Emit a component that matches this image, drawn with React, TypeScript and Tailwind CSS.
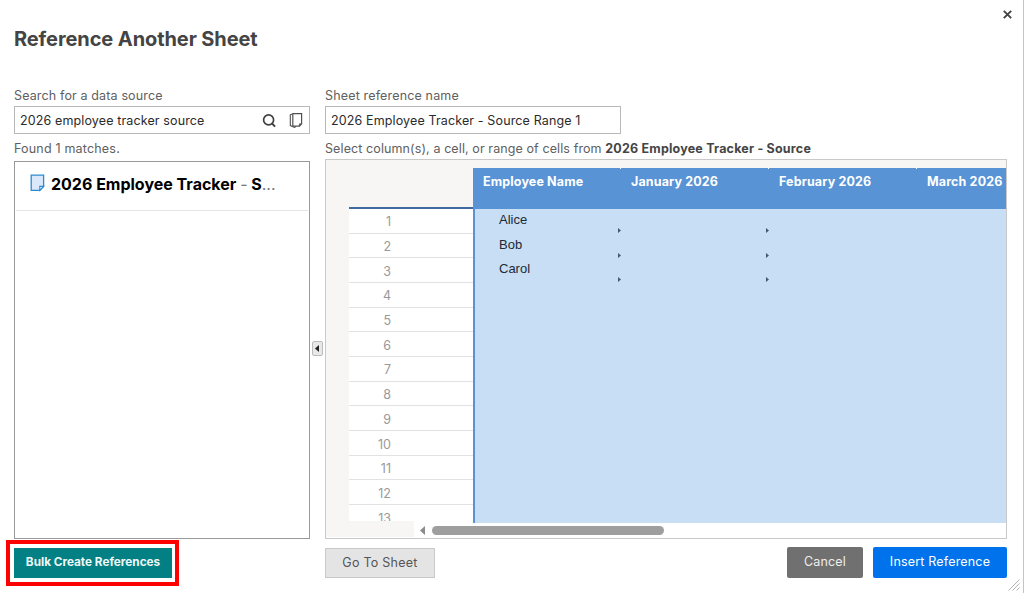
import type { ReactNode } from "react";

const SOURCE_NAME = "2026 Employee Tracker - Source";
const COLUMNS = ["Employee Name", "January 2026", "February 2026", "March 2026"];
const NAMES = ["Alice", "Bob", "Carol"];
const ROW_NUMBERS = Array.from({ length: 13 }, (_, i) => i + 1);

function SearchIcon() {
  return (
    <svg width="16" height="16" viewBox="0 0 16 16" fill="none" stroke="#404040">
      <circle cx="7.6" cy="7.9" r="5" strokeWidth="1.7" />
      <path d="M11.2 11.6 L14 14.6" strokeWidth="2" />
    </svg>
  );
}

function SheetsIcon() {
  return (
    <svg width="14" height="16" viewBox="0 0 14 16" fill="none" stroke="#505050">
      <path d="M3.8 1.6 H12.6 V11.8 L10.4 14.2 H3.8 Z" strokeWidth="1.2" />
      <path d="M12.6 11.8 H10.4 V14.2 Z" fill="#505050" strokeWidth="0.6" />
      <path d="M3.4 1.9 L1.3 2.8 V13.6 L5.6 15.4 L7 14.4" strokeWidth="1.1" />
    </svg>
  );
}

function SheetIcon() {
  return (
    <svg width="15" height="18" viewBox="0 0 15 18" fill="none">
      <path d="M1.2 1.2 H13.6 V12.4 L9.8 16.4 H1.2 Z" fill="#dbe7fb" stroke="#2c8bd0" strokeWidth="1.3" />
      <path d="M13.6 12.4 H9.8 V16.4 Z" fill="#fff" stroke="#2c8bd0" strokeWidth="1.1" />
    </svg>
  );
}

function Label({ children }: { children: ReactNode }) {
  return (
    <div className="flex h-[22px] items-center whitespace-nowrap pt-0.5 text-[12.5px] text-[#606060]">
      {children}
    </div>
  );
}

function SourcePane() {
  return (
    <section className="flex w-[296px] flex-col">
      <Label>
        <span className="tracking-[0.14px]">Search for a data source</span>
      </Label>
      <div className="flex h-7 items-center border border-[#b8b8b8] pl-[5px] pr-1.5">
        <span className="flex-1 pt-0.5 text-[12.5px] tracking-[0.13px] text-[#2b2b2b]">
          2026 employee tracker source
        </span>
        <SearchIcon />
        <span className="ml-3 flex">
          <SheetsIcon />
        </span>
      </div>
      <div className="flex h-[27px] items-center pt-[3px] text-[12.5px] tracking-[0.19px] text-[#606060]">
        Found 1 matches.
      </div>
      <div className="flex-1 border border-[#999]">
        <div className="mx-px flex h-[49px] items-center border-b border-[#e4e4e4] pb-1 pl-3.5">
          <span className="-mt-0.5">
            <SheetIcon />
          </span>
          <span className="ml-1.5 whitespace-nowrap text-base font-bold text-black">
            2026 Employee Tracker <span className="font-normal text-[#777]">-</span> S
            <span className="font-normal text-[#777]">...</span>
          </span>
        </div>
      </div>
    </section>
  );
}

function RowNumbers() {
  return (
    <div className="flex w-[147px] flex-col bg-[#f7f6f5]">
      <div className="ml-[23px] h-[49px] border-b-2 border-[#41699f]" />
      <div className="ml-[23px] h-[312px] overflow-hidden bg-white">
        {ROW_NUMBERS.map((n) => (
          <div
            key={n}
            className="flex h-[24.68px] items-center border-b border-[#e2e2e2] text-[12.5px] text-[#999]"
          >
            <span className="w-[42px] pt-1 text-right">{n}</span>
          </div>
        ))}
      </div>
      <div className="flex-1 bg-white" />
    </div>
  );
}

function SelectedCells() {
  return (
    <div className="mt-2 flex h-[355px] flex-1 flex-col overflow-hidden">
      <div className="flex h-[41px] shrink-0 bg-[#5793d5]">
        {COLUMNS.map((name, i) => (
          <div key={name} className="flex w-[148px] shrink-0 justify-between">
            <span className="whitespace-nowrap pl-2.5 pt-1 text-[12.5px] font-bold leading-[19px] tracking-[0.14px] text-white">
              {name}
            </span>
            {i < 3 && <span className="h-px w-px bg-white" />}
          </div>
        ))}
      </div>
      <div className="flex-1 border-l-2 border-[#5793d5] bg-[#c8def4]">
        {NAMES.map((name) => (
          <div key={name} className="flex h-[24.68px]">
            <span className="w-[143px] pl-6 pt-px font-['Liberation_Sans',sans-serif] text-[13px] leading-[20px] text-[#202a36]">
              {name}
            </span>
            <CellMark />
            <span className="w-[145px]" />
            <CellMark />
          </div>
        ))}
      </div>
    </div>
  );
}

function CellMark() {
  return (
    <svg className="mt-[19px] shrink-0" width="3" height="5" viewBox="0 0 3 5">
      <path d="M0 0 L3 2.5 L0 5 Z" fill="#405a78" />
    </svg>
  );
}

function SheetGrid() {
  return (
    <div className="flex flex-1 flex-col border border-[#c9c9c9]">
      <div className="flex h-[363px] bg-[#f7f6f5]">
        <RowNumbers />
        <SelectedCells />
      </div>
      <div className="flex flex-1">
        <div className="-mt-0.5 mb-px w-[88px] bg-[#f7f6f5]" />
        <div className="flex items-start pl-1.5 pt-[3px]">
          <svg width="5" height="9" viewBox="0 0 5 9">
            <path d="M5 0 L0 4.5 L5 9 Z" fill="#8b8b8b" />
          </svg>
          <div className="ml-[7px] h-[9px] w-[232px] rounded-full bg-[#9e9e9e]" />
        </div>
      </div>
    </div>
  );
}

function RangePane() {
  return (
    <section className="flex w-[682px] flex-col">
      <Label>
        <span className="tracking-[0.16px]">Sheet reference name</span>
      </Label>
      <div className="flex h-7 w-[296px] items-center border border-[#b8b8b8] pl-[5px] pt-0.5 text-[12.5px] tracking-[0.13px] text-[#2b2b2b]">
        {SOURCE_NAME} Range 1
      </div>
      <div className="flex h-[25px] items-center whitespace-pre pt-[5px] text-[12.5px] tracking-[0.1px] text-[#606060]">
        Select column(s), a cell, or range of cells from{" "}
        <strong className="font-bold tracking-[0.2px] text-[#454545]">{SOURCE_NAME}</strong>
      </div>
      <SheetGrid />
    </section>
  );
}

export default function App() {
  return (
    <div className="relative flex h-[593px] w-[1024px] flex-col overflow-hidden border-r border-[#c4c4c4] bg-white font-['Inter',sans-serif]">
      <header className="flex h-[84px] items-start justify-between pl-3.5 pr-[11px]">
        <h1 className="pt-[25px] text-[20px] font-bold leading-7 tracking-[-0.09px] text-[#444]">
          Reference Another Sheet
        </h1>
        <button type="button" aria-label="Close" className="mt-2.5">
          <svg width="9" height="9" viewBox="0 0 9 9" stroke="#444" strokeWidth="1.9">
            <path d="M0.8 0.8 L8.2 8.2 M8.2 0.8 L0.8 8.2" />
          </svg>
        </button>
      </header>

      <main className="flex h-[455px] pl-3.5">
        <SourcePane />
        <div className="flex w-[15px] items-start pl-0.5 pt-[257px]">
          <button
            type="button"
            aria-label="Collapse"
            className="flex h-[15px] w-[11px] items-center justify-center rounded-xs border border-[#bcbcbc] bg-[#e8e8e8] pr-px"
          >
            <svg width="4" height="7" viewBox="0 0 4 7">
              <path d="M4 0 L0 3.5 L4 7 Z" fill="#222" />
            </svg>
          </button>
        </div>
        <RangePane />
      </main>

      <footer className="flex flex-1 items-start pl-1.5 pr-4 pt-px">
        <div className="flex h-[46px] w-[173px] border-4 border-[#fd0000] p-1 pr-[3px]">
          <button
            type="button"
            className="flex-1 whitespace-nowrap bg-[#038083] text-[11.75px] font-bold text-[#eef8f8]"
          >
            Bulk Create References
          </button>
        </div>
        <button
          type="button"
          className="ml-[146px] mt-2 h-[30px] w-[110px] border border-[#c9c9c9] bg-[#e4e4e4] pt-px text-[12.5px] tracking-[0.26px] text-[#555]"
        >
          Go To Sheet
        </button>
        <button
          type="button"
          className="ml-auto mt-[7px] h-[31px] w-[76px] rounded-xs bg-[#707070] text-[12.5px] tracking-[0.15px] text-[#eee]"
        >
          Cancel
        </button>
        <button
          type="button"
          className="ml-2.5 mt-[7px] h-[31px] w-[134px] rounded-xs bg-[#0073ec] text-[12.5px] tracking-[0.18px] text-white"
        >
          Insert Reference
        </button>
      </footer>

      <svg className="absolute bottom-0.5 right-[3px]" width="12" height="12" viewBox="0 0 12 12" stroke="#b4b4b4">
        <path d="M0.5 11.5 L11.5 0.5 M4.5 11.5 L11.5 4.5 M8.5 11.5 L11.5 8.5" />
      </svg>
    </div>
  );
}
